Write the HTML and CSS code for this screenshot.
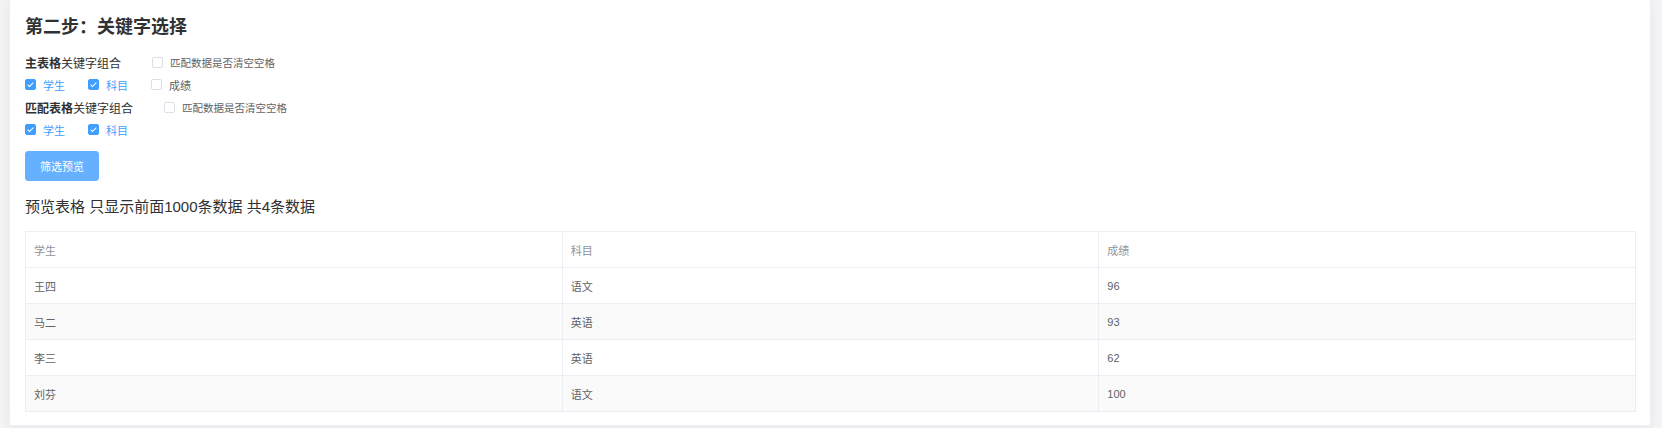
FILE: index.html
```html
<!DOCTYPE html>
<html lang="zh-CN">
<head>
<meta charset="utf-8">
<title>第二步：关键字选择</title>
<link rel="stylesheet" href="styles.css">
</head>
<body>
<div class="card">
  <h2 class="title">第二步：关键字选择</h2>

  <div class="row">
    <span class="group-label"><b>主表格</b>关键字组合</span>
    <label class="cb cb-trim"><span class="box"></span><span class="txt">匹配数据是否清空空格</span></label>
  </div>
  <div class="row">
    <label class="cb checked"><span class="box"></span><span class="txt">学生</span></label>
    <label class="cb checked"><span class="box"></span><span class="txt">科目</span></label>
    <label class="cb"><span class="box"></span><span class="txt">成绩</span></label>
  </div>

  <div class="row">
    <span class="group-label"><b>匹配表格</b>关键字组合</span>
    <label class="cb cb-trim"><span class="box"></span><span class="txt">匹配数据是否清空空格</span></label>
  </div>
  <div class="row">
    <label class="cb checked"><span class="box"></span><span class="txt">学生</span></label>
    <label class="cb checked"><span class="box"></span><span class="txt">科目</span></label>
  </div>

  <button class="btn" type="button">筛选预览</button>

  <div class="preview-title">预览表格 只显示前面1000条数据 共4条数据</div>

  <table class="grid">
    <thead>
      <tr><th>学生</th><th>科目</th><th>成绩</th></tr>
    </thead>
    <tbody>
      <tr><td>王四</td><td>语文</td><td>96</td></tr>
      <tr class="stripe"><td>马二</td><td>英语</td><td>93</td></tr>
      <tr><td>李三</td><td>英语</td><td>62</td></tr>
      <tr class="stripe"><td>刘芬</td><td>语文</td><td>100</td></tr>
    </tbody>
  </table>
</div>
</body>
</html>
```

FILE: styles.css
```css
html, body {
  margin: 0;
  padding: 0;
}

body {
  background: #f4f4f6;
  font-family: "Liberation Sans", "Noto Sans CJK SC", sans-serif;
  color: #606266;
  padding: 0 11px 0 9px;
  height: 428px;
  box-sizing: border-box;
  overflow: hidden;
}

.card {
  background: #fff;
  border: 1px solid #ebeef5;
  border-top: none;
  box-shadow: 0 2px 12px 0 rgba(0, 0, 0, 0.06);
  padding: 15px 14px 13px 15px;
  height: 426px;
  box-sizing: border-box;
}

.title {
  margin: 0;
  font-size: 18px;
  line-height: 24px;
  font-weight: 700;
  color: #303133;
}

.row {
  display: flex;
  align-items: center;
  height: 22.5px;
}

.title + .row {
  margin-top: 12px;
}

.group-label {
  font-size: 12px;
  color: #303133;
  margin-right: 31px;
}

.group-label b {
  font-weight: 700;
}

.cb {
  display: inline-flex;
  align-items: center;
  margin-right: 23px;
  font-size: 11px;
  color: #606266;
}

.cb-trim .txt {
  font-size: 10.5px;
}

.box {
  width: 11px;
  height: 11px;
  box-sizing: border-box;
  border: 1px solid #dcdfe6;
  border-radius: 2px;
  background: #fff;
  position: relative;
  margin-right: 7px;
}

.cb.checked .box {
  background: #409eff;
  border-color: #409eff;
}

.cb.checked .box::after {
  content: "";
  position: absolute;
  left: 3px;
  top: 1px;
  width: 2px;
  height: 5px;
  border: 1px solid #fff;
  border-left: 0;
  border-top: 0;
  transform: rotate(45deg);
}

.cb.checked .txt {
  color: #409eff;
}

.btn {
  display: block;
  margin-top: 10px;
  width: 74px;
  height: 30px;
  border: 1px solid #66b1ff;
  border-radius: 3px;
  background: #66b1ff;
  color: #fff;
  font-family: "Liberation Sans", "Noto Sans CJK SC", sans-serif;
  font-size: 11px;
  padding: 0;
}

.preview-title {
  margin-top: 16px;
  font-size: 15px;
  line-height: 20px;
  color: #303133;
}

.grid {
  margin-top: 14px;
  width: 100%;
  table-layout: fixed;
  border-collapse: separate;
  border-spacing: 0;
  border-top: 1px solid #ebeef5;
  border-left: 1px solid #ebeef5;
  font-size: 11px;
}

.grid th,
.grid td {
  height: 36px;
  padding: 0 8px;
  text-align: left;
  border-right: 1px solid #ebeef5;
  border-bottom: 1px solid #ebeef5;
  box-sizing: border-box;
}

.grid th {
  color: #909399;
  font-weight: 400;
}

.grid td {
  color: #606266;
}

.grid tr.stripe td {
  background: #fafafa;
}
```
